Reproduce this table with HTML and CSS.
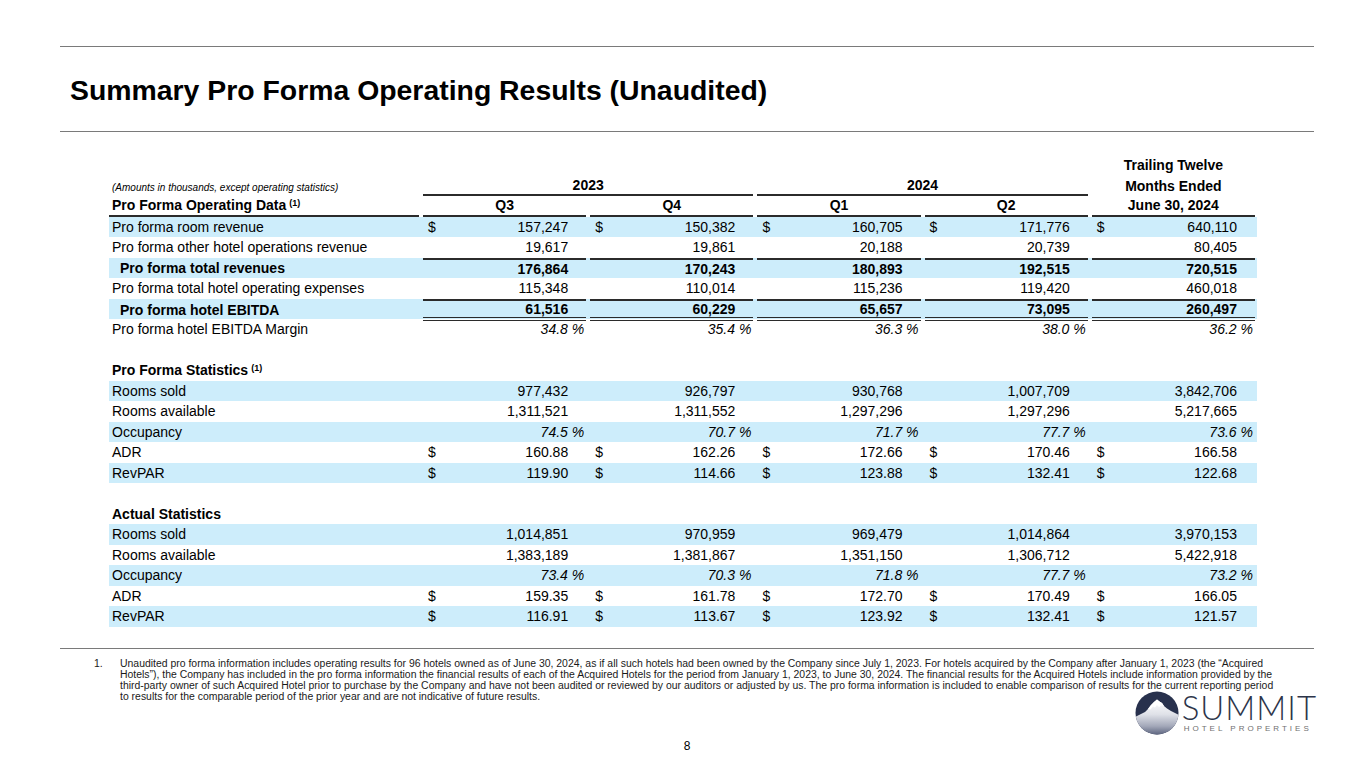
FILE: index.html
```html
<!DOCTYPE html>
<html lang="en">
<head>
<meta charset="utf-8">
<title>Summary Pro Forma Operating Results (Unaudited)</title>
<link rel="stylesheet" href="styles.css">
</head>
<body>
<div class="page">
  <div class="rule"></div>
  <h1 class="title">Summary Pro Forma Operating Results (Unaudited)</h1>
  <div class="rule"></div>

  <div class="fin">
    <div class="row">
      <div class="c lab"></div>
      <div class="c h"></div><div class="c h"></div><div class="c h"></div><div class="c h"></div>
      <div class="c h">Trailing Twelve</div>
    </div>
    <div class="row">
      <div class="c lab note">(Amounts in thousands, except operating statistics)</div>
      <div class="c h span2 ul">2023</div>
      <div class="c h span2 ul">2024</div>
      <div class="c h">Months Ended</div>
    </div>
    <div class="row">
      <div class="c lab b ul">Pro Forma Operating Data<sup>(1)</sup></div>
      <div class="c h ul">Q3</div>
      <div class="c h ul">Q4</div>
      <div class="c h ul">Q1</div>
      <div class="c h ul">Q2</div>
      <div class="c h ul">June 30, 2024</div>
    </div>

    <div class="row band">
      <div class="c lab">Pro forma room revenue</div>
      <div class="c d"><span>$</span><span>157,247</span></div>
      <div class="c d"><span>$</span><span>150,382</span></div>
      <div class="c d"><span>$</span><span>160,705</span></div>
      <div class="c d"><span>$</span><span>171,776</span></div>
      <div class="c d"><span>$</span><span>640,110</span></div>
    </div>
    <div class="row">
      <div class="c lab">Pro forma other hotel operations revenue</div>
      <div class="c">19,617</div><div class="c">19,861</div><div class="c">20,188</div><div class="c">20,739</div><div class="c">80,405</div>
    </div>
    <div class="row band tot">
      <div class="c lab ind">Pro forma total revenues</div>
      <div class="c ol">176,864</div><div class="c ol">170,243</div><div class="c ol">180,893</div><div class="c ol">192,515</div><div class="c ol">720,515</div>
    </div>
    <div class="row">
      <div class="c lab">Pro forma total hotel operating expenses</div>
      <div class="c">115,348</div><div class="c">110,014</div><div class="c">115,236</div><div class="c">119,420</div><div class="c">460,018</div>
    </div>
    <div class="row band tot">
      <div class="c lab ind">Pro forma hotel EBITDA</div>
      <div class="c ol dbl">61,516</div><div class="c ol dbl">60,229</div><div class="c ol dbl">65,657</div><div class="c ol dbl">73,095</div><div class="c ol dbl">260,497</div>
    </div>
    <div class="row">
      <div class="c lab">Pro forma hotel EBITDA Margin</div>
      <div class="c pct">34.8 %</div><div class="c pct">35.4 %</div><div class="c pct">36.3 %</div><div class="c pct">38.0 %</div><div class="c pct">36.2 %</div>
    </div>
    <div class="row"></div>

    <div class="row">
      <div class="c lab b">Pro Forma Statistics<sup>(1)</sup></div>
    </div>
    <div class="row band">
      <div class="c lab">Rooms sold</div>
      <div class="c">977,432</div><div class="c">926,797</div><div class="c">930,768</div><div class="c">1,007,709</div><div class="c">3,842,706</div>
    </div>
    <div class="row">
      <div class="c lab">Rooms available</div>
      <div class="c">1,311,521</div><div class="c">1,311,552</div><div class="c">1,297,296</div><div class="c">1,297,296</div><div class="c">5,217,665</div>
    </div>
    <div class="row band">
      <div class="c lab">Occupancy</div>
      <div class="c pct">74.5 %</div><div class="c pct">70.7 %</div><div class="c pct">71.7 %</div><div class="c pct">77.7 %</div><div class="c pct">73.6 %</div>
    </div>
    <div class="row">
      <div class="c lab">ADR</div>
      <div class="c d"><span>$</span><span>160.88</span></div>
      <div class="c d"><span>$</span><span>162.26</span></div>
      <div class="c d"><span>$</span><span>172.66</span></div>
      <div class="c d"><span>$</span><span>170.46</span></div>
      <div class="c d"><span>$</span><span>166.58</span></div>
    </div>
    <div class="row band">
      <div class="c lab">RevPAR</div>
      <div class="c d"><span>$</span><span>119.90</span></div>
      <div class="c d"><span>$</span><span>114.66</span></div>
      <div class="c d"><span>$</span><span>123.88</span></div>
      <div class="c d"><span>$</span><span>132.41</span></div>
      <div class="c d"><span>$</span><span>122.68</span></div>
    </div>
    <div class="row"></div>

    <div class="row">
      <div class="c lab b">Actual Statistics</div>
    </div>
    <div class="row band">
      <div class="c lab">Rooms sold</div>
      <div class="c">1,014,851</div><div class="c">970,959</div><div class="c">969,479</div><div class="c">1,014,864</div><div class="c">3,970,153</div>
    </div>
    <div class="row">
      <div class="c lab">Rooms available</div>
      <div class="c">1,383,189</div><div class="c">1,381,867</div><div class="c">1,351,150</div><div class="c">1,306,712</div><div class="c">5,422,918</div>
    </div>
    <div class="row band">
      <div class="c lab">Occupancy</div>
      <div class="c pct">73.4 %</div><div class="c pct">70.3 %</div><div class="c pct">71.8 %</div><div class="c pct">77.7 %</div><div class="c pct">73.2 %</div>
    </div>
    <div class="row">
      <div class="c lab">ADR</div>
      <div class="c d"><span>$</span><span>159.35</span></div>
      <div class="c d"><span>$</span><span>161.78</span></div>
      <div class="c d"><span>$</span><span>172.70</span></div>
      <div class="c d"><span>$</span><span>170.49</span></div>
      <div class="c d"><span>$</span><span>166.05</span></div>
    </div>
    <div class="row band">
      <div class="c lab">RevPAR</div>
      <div class="c d"><span>$</span><span>116.91</span></div>
      <div class="c d"><span>$</span><span>113.67</span></div>
      <div class="c d"><span>$</span><span>123.92</span></div>
      <div class="c d"><span>$</span><span>132.41</span></div>
      <div class="c d"><span>$</span><span>121.57</span></div>
    </div>
  </div>

  <div class="rule r3"></div>

  <div class="foot">
    <span>1.</span>
    <p>Unaudited pro forma information includes operating results for 96 hotels owned as of June 30, 2024, as if all such hotels had been owned by the Company since July 1, 2023. For hotels acquired by the Company after January 1, 2023 (the “Acquired<br>Hotels”), the Company has included in the pro forma information the financial results of each of the Acquired Hotels for the period from January 1, 2023, to June 30, 2024. The financial results for the Acquired Hotels include information provided by the<br>third-party owner of such Acquired Hotel prior to purchase by the Company and have not been audited or reviewed by our auditors or adjusted by us. The pro forma information is included to enable comparison of results for the current reporting period<br>to results for the comparable period of the prior year and are not indicative of future results.</p>
  </div>

  <div class="logo-row">
    <div class="logo">
      <svg class="emblem" width="44" height="44" viewBox="0 0 44 44" aria-hidden="true">
        <defs>
          <clipPath id="cc"><circle cx="22" cy="22" r="21.5"/></clipPath>
          <linearGradient id="mg" x1="0" y1="0" x2="0" y2="1">
            <stop offset="0" stop-color="#ffffff"/>
            <stop offset="0.42" stop-color="#dfe1e8"/>
            <stop offset="0.75" stop-color="#a3a8b9"/>
            <stop offset="1" stop-color="#5a627d"/>
          </linearGradient>
        </defs>
        <g clip-path="url(#cc)">
          <rect width="44" height="44" fill="#28314d"/>
          <path d="M0 26 L6 23 L10 21 L13 18 L16 14 L19 11 L22 8.5 L24.5 10.5 L27 12 L29 15 L32 17.5 L36 20 L40 22 L44 24 L44 44 L0 44 Z" fill="url(#mg)"/>
          <path d="M13 18 L16 14 L19 11 L22 8.5 L24.5 10.5 L27 12 L29 15 L26 14.5 L24 16 L22 14 L20 16.5 L18 15.5 L15.5 18.5 Z" fill="#ffffff"/>
        </g>
      </svg>
      <div class="brand">
        <span class="summit">SUMMIT</span>
        <span class="hp">HOTEL PROPERTIES</span>
      </div>
    </div>
  </div>

  <div class="pgno">8</div>
</div>
</body>
</html>
```
FILE: styles.css
```css
* { box-sizing: border-box; }

body {
  margin: 0;
  background: #ffffff;
  font-family: "Liberation Sans", Arial, sans-serif;
  color: #000000;
}

.page {
  width: 1365px;
  height: 768px;
  padding: 46px 51px 0 60px;
  overflow: hidden;
}

.rule {
  border-top: 1.5px solid #7a7a7a;
}

.title {
  height: 84px;
  margin: 0;
  padding: 3px 0 0 10px;
  display: flex;
  align-items: center;
  font-size: 28.4px;
  font-weight: 700;
  letter-spacing: 0;
}

/* ---------- table ---------- */
.fin {
  width: 1148px;
  margin: 23px 0 0 49px;
}

.row {
  display: grid;
  grid-template-columns: 312px repeat(5, 167.2px);
  height: 20.5px;
  font-size: 14px;
}

.band { background: #cdedfb; }

.c {
  margin: 0 2px;
  padding: 0 18px 0 5px;
  display: flex;
  align-items: center;
  justify-content: flex-end;
  white-space: nowrap;
  min-width: 0;
}

.c.d { justify-content: space-between; }

.c.pct {
  padding-right: 2px;
  font-style: italic;
}

.c.lab {
  margin: 0 2px 0 0;
  padding: 0 0 0 3px;
  justify-content: flex-start;
}

.c.lab.ind { padding-left: 11px; }

.tot .c { font-weight: 700; }

.c.b { font-weight: 700; }

.c.h {
  padding: 0;
  justify-content: center;
  font-weight: 700;
}

.span2 { grid-column: span 2; }

.c.note {
  align-items: flex-end;
  padding-bottom: 3px;
  font-size: 10px;
  font-style: italic;
}

.ul { border-bottom: 2px solid #2b2b2b; }
.ol { border-top: 2px solid #2b2b2b; }
.dbl { border-bottom: 4px double #2b2b2b; }

sup {
  font-size: 9px;
  line-height: 0;
  margin-left: 3px;
  position: relative;
  top: -2px;
}

/* ---------- footer ---------- */
.r3 { margin-top: 21.5px; }

.foot {
  display: grid;
  grid-template-columns: 26px 1fr;
  margin: 9px 0 0 34px;
  font-size: 10.45px;
  line-height: 11px;
  color: #1a1a1a;
}

.foot p { margin: 0; white-space: nowrap; }

.logo-row {
  display: flex;
  justify-content: flex-end;
  margin: -11px -3px 0 0;
}

.logo {
  display: flex;
  align-items: center;
  gap: 3px;
}

.brand {
  display: flex;
  flex-direction: column;
  align-items: flex-start;
}

.summit {
  font-family: Lato, "Open Sans", sans-serif;
  font-weight: 300;
  font-size: 33px;
  line-height: 28px;
  letter-spacing: 1px;
  color: #2c3449;
}

.hp {
  font-family: "Liberation Sans", Arial, sans-serif;
  font-size: 8px;
  line-height: 9px;
  letter-spacing: 3px;
  color: #707070;
  padding-left: 2px;
  margin-top: 3px;
}

.pgno {
  text-align: center;
  font-size: 12px;
  line-height: 14px;
  margin-top: 4px;
}
```
